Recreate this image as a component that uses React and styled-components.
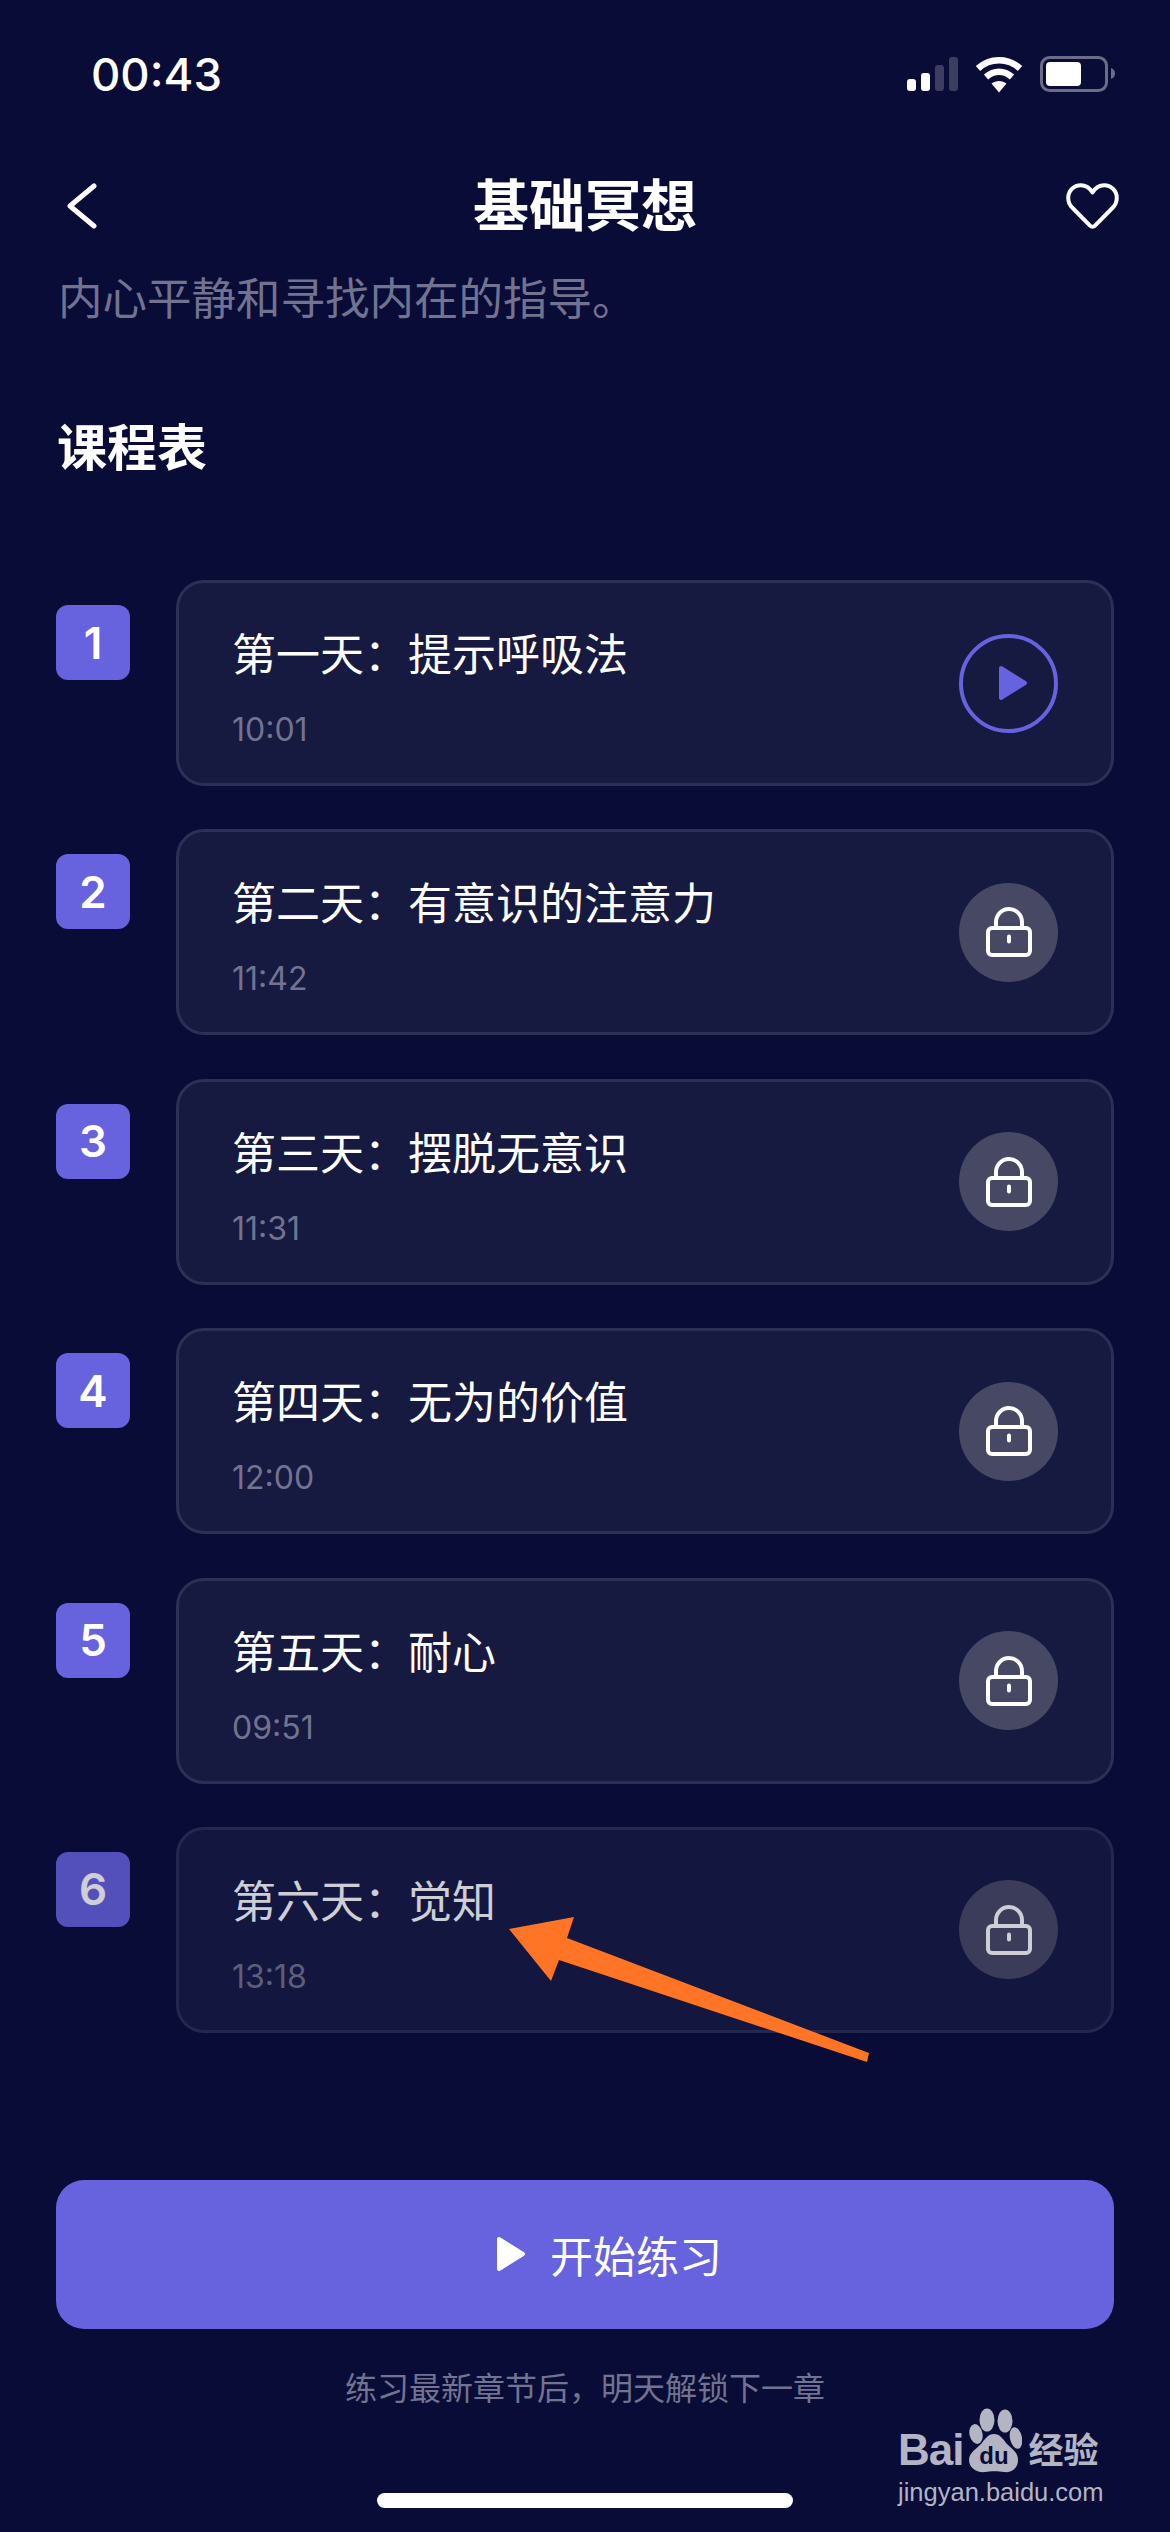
import styled, { createGlobalStyle } from 'styled-components';

const CJK = `"Noto Sans CJK SC", "Noto Sans", sans-serif`;
const LATIN = `Inter, "Noto Sans CJK SC", sans-serif`;
const BG = '#090c36';
const PURPLE = '#6762dd';
const MUTED = '#717390';

const lessons = [
  { day: '第一天\uFF1A提示呼吸法', time: '10:01', active: true },
  { day: '第二天\uFF1A有意识的注意力', time: '11:42' },
  { day: '第三天\uFF1A摆脱无意识', time: '11:31' },
  { day: '第四天\uFF1A无为的价值', time: '12:00' },
  { day: '第五天\uFF1A耐心', time: '09:51' },
  { day: '第六天\uFF1A觉知', time: '13:18', faded: true },
];

const GlobalStyle = createGlobalStyle`
  html, body {
    margin: 0;
    padding: 0;
    background: ${BG};
  }
  * {
    box-sizing: border-box;
  }
`;

const Screen = styled.div`
  position: relative;
  width: 1170px;
  height: 2532px;
  overflow: hidden;
  display: flex;
  flex-direction: column;
  background: ${BG};
  color: #fff;
  font-family: ${CJK};
`;

const StatusBar = styled.div`
  height: 148px;
  padding: 0 55px 0 91px;
  display: flex;
  align-items: center;
  justify-content: space-between;
`;

const Clock = styled.div`
  font-family: ${LATIN};
  font-size: 45.5px;
  font-weight: 500;
`;

const StatusIcons = styled.div`
  display: flex;
  align-items: center;
`;

const NavBar = styled.div`
  height: 116px;
  padding: 0 51px;
  display: grid;
  grid-template-columns: 1fr auto 1fr;
  align-items: center;
`;

const BackSlot = styled.div`
  display: flex;
  padding-left: 16px;
`;

const NavTitle = styled.div`
  font-size: 56px;
  font-weight: 700;
  line-height: 70px;
  margin-top: -8px;
`;

const HeartSlot = styled.div`
  display: flex;
  justify-content: flex-end;
`;

const Subtitle = styled.div`
  margin-top: 2px;
  padding: 0 58px;
  font-size: 44.5px;
  line-height: 60px;
  color: ${MUTED};
`;

const SectionTitle = styled.div`
  margin-top: 88px;
  padding: 0 57px;
  font-size: 50px;
  font-weight: 700;
  line-height: 60px;
`;

const LessonList = styled.div`
  margin-top: 106px;
  padding: 0 56px;
  display: flex;
  flex-direction: column;
  gap: 43.4px;
`;

const LessonRow = styled.div`
  display: flex;
  gap: 46px;
  opacity: ${({ $faded }) => ($faded ? 0.8 : 1)};
`;

const Badge = styled.div`
  flex: none;
  width: 74px;
  height: 75px;
  margin-top: 25px;
  border-radius: 12px;
  background: ${PURPLE};
  display: flex;
  align-items: center;
  justify-content: center;
  font-family: ${LATIN};
  font-size: 44px;
  font-weight: 600;
`;

const Card = styled.div`
  flex: 1;
  height: 206px;
  padding: 0 53px;
  border: 3px solid #2d2f55;
  border-radius: 28px;
  background: #161940;
  display: flex;
  align-items: center;
  justify-content: space-between;
`;

const CardText = styled.div`
  margin-top: 6px;
`;

const DayName = styled.div`
  font-size: 44px;
  line-height: 60px;
`;

const Duration = styled.div`
  margin-top: 28px;
  font-family: ${LATIN};
  font-size: 32px;
  line-height: 40px;
  color: ${MUTED};
`;

const RoundIcon = styled.div`
  width: 99px;
  height: 99px;
  border-radius: 50%;
  display: flex;
  align-items: center;
  justify-content: center;
  background: ${({ $locked }) => ($locked ? '#474864' : 'transparent')};
  border: ${({ $locked }) => ($locked ? 'none' : `4px solid ${PURPLE}`)};
`;

const StartButton = styled.div`
  margin: 147px 56px 0;
  height: 149px;
  padding-left: 48px;
  border-radius: 28px;
  background: ${PURPLE};
  display: flex;
  align-items: center;
  justify-content: center;
  gap: 24px;
  font-size: 43px;
`;

const Hint = styled.div`
  margin-top: 37px;
  text-align: center;
  font-size: 32px;
  line-height: 40px;
  color: ${MUTED};
`;

const HomeIndicator = styled.div`
  align-self: center;
  width: 416px;
  height: 15px;
  margin-top: 87px;
  border-radius: 8px;
  background: #fff;
`;

const Watermark = styled.div`
  position: absolute;
  left: 898px;
  top: 2408px;
  width: 212px;
  color: #b3b4c4;
  font-family: "Liberation Sans", sans-serif;
`;

const BrandLine = styled.div`
  display: flex;
  align-items: flex-end;
  height: 65px;
`;

const BrandWord = styled.span`
  font-size: 44px;
  font-weight: 700;
  line-height: 46px;
  letter-spacing: -1px;
  margin-right: 5px;
`;

const BrandTag = styled.span`
  font-family: ${CJK};
  font-size: 35px;
  font-weight: 700;
  line-height: 50px;
  margin-left: 6px;
`;

const Domain = styled.div`
  margin-top: 2px;
  font-size: 25.5px;
  line-height: 34px;
  white-space: nowrap;
`;

const ArrowOverlay = styled.svg`
  position: absolute;
  left: 0;
  top: 0;
  pointer-events: none;
`;

function SignalIcon() {
  const bars = [
    { x: 0, h: 12, on: true },
    { x: 14, h: 18, on: true },
    { x: 28, h: 26 },
    { x: 42, h: 34 },
  ];
  return (
    <svg width="51" height="34" viewBox="0 0 51 34">
      {bars.map((b) => (
        <rect
          key={b.x}
          x={b.x}
          y={34 - b.h}
          width="9"
          height={b.h}
          rx="3"
          fill={b.on ? '#fff' : '#3c3e60'}
        />
      ))}
    </svg>
  );
}

function WifiIcon() {
  return (
    <svg width="48" height="37" viewBox="0 0 48 37" style={{ margin: '0 17px' }}>
      <path d="M3 12.5C15 1.5 33 1.5 45 12.5" fill="none" stroke="#fff" strokeWidth="6.5" />
      <path d="M11 21C19 14 29 14 37 21" fill="none" stroke="#fff" strokeWidth="6.5" />
      <path d="M16.5 27.5C21 24 27 24 31.5 27.5L24 36.5Z" fill="#fff" />
    </svg>
  );
}

function BatteryIcon() {
  return (
    <svg width="75" height="36" viewBox="0 0 75 36">
      <rect x="1.5" y="1.5" width="65" height="33" rx="8" fill="none" stroke="#6a6c88" strokeWidth="3" />
      <rect x="6" y="6" width="35" height="24" rx="4" fill="#fff" />
      <path d="M71 12C74 13 75 15 75 17.5C75 20 74 22 71 23Z" fill="#6a6c88" />
    </svg>
  );
}

function BackIcon() {
  return (
    <svg width="30" height="46" viewBox="0 0 30 46">
      <path d="M27 3L3 23L27 43" fill="none" stroke="#fff" strokeWidth="5" strokeLinecap="round" strokeLinejoin="round" />
    </svg>
  );
}

function HeartIcon() {
  return (
    <svg width="53" height="46" viewBox="0 0 53 46">
      <path
        d="M26.5 9.5C23.5 4.5 19.5 2.2 14.8 2.2C7.8 2.2 2.2 7.8 2.2 15C2.2 19 3.8 22.3 6.6 25L24 42.6C25.4 44 27.6 44 29 42.6L46.4 25C49.2 22.3 50.8 19 50.8 15C50.8 7.8 45.2 2.2 38.2 2.2C33.5 2.2 29.5 4.5 26.5 9.5Z"
        fill="none"
        stroke="#fff"
        strokeWidth="4"
        strokeLinejoin="round"
      />
    </svg>
  );
}

function PlayIcon({ color, style }) {
  return (
    <svg width="30" height="36" viewBox="0 0 30 36" style={style}>
      <path d="M3 3L27 18L3 33Z" fill={color} stroke={color} strokeWidth="4" strokeLinejoin="round" />
    </svg>
  );
}

function LockIcon() {
  return (
    <svg width="46" height="50" viewBox="0 0 46 50" fill="none" stroke="#fff" strokeWidth="4">
      <rect x="2" y="21" width="42" height="27" rx="4" />
      <path d="M10 21V15a13 13 0 0 1 26 0V21" />
      <path d="M23 29.5V34.5" strokeLinecap="round" />
    </svg>
  );
}

function PawIcon() {
  return (
    <svg width="54" height="65" viewBox="0 0 54 65">
      <ellipse cx="8" cy="26" rx="6.5" ry="10" transform="rotate(-12 8 26)" fill="#b3b4c4" />
      <ellipse cx="19" cy="12" rx="7.5" ry="11.5" fill="#b3b4c4" />
      <ellipse cx="37" cy="13" rx="7.5" ry="11.5" fill="#b3b4c4" />
      <ellipse cx="48" cy="30" rx="6" ry="11" transform="rotate(-12 48 30)" fill="#b3b4c4" />
      <path
        d="M26 26C32 26 35 31 39 36C44 41 50 44 50 52C50 60 44 65 36 64C31 63 22 63 17 64C9 65 1 60 1 52C1 45 8 41 13 36C17 31 20 26 26 26Z"
        fill="#b3b4c4"
      />
      <text x="26" y="56" textAnchor="middle" fontFamily="Liberation Sans, sans-serif" fontSize="24" fontWeight="700" fill={BG}>
        du
      </text>
    </svg>
  );
}

function Lesson({ index, day, time, active, faded }) {
  return (
    <LessonRow $faded={faded}>
      <Badge>{index}</Badge>
      <Card>
        <CardText>
          <DayName>{day}</DayName>
          <Duration>{time}</Duration>
        </CardText>
        {active ? (
          <RoundIcon>
            <PlayIcon color={PURPLE} style={{ marginLeft: 8 }} />
          </RoundIcon>
        ) : (
          <RoundIcon $locked>
            <LockIcon />
          </RoundIcon>
        )}
      </Card>
    </LessonRow>
  );
}

export default function App() {
  return (
    <>
      <GlobalStyle />
      <Screen>
        <StatusBar>
          <Clock>00:43</Clock>
          <StatusIcons>
            <SignalIcon />
            <WifiIcon />
            <BatteryIcon />
          </StatusIcons>
        </StatusBar>
        <NavBar>
          <BackSlot>
            <BackIcon />
          </BackSlot>
          <NavTitle>基础冥想</NavTitle>
          <HeartSlot>
            <HeartIcon />
          </HeartSlot>
        </NavBar>
        <Subtitle>内心平静和寻找内在的指导。</Subtitle>
        <SectionTitle>课程表</SectionTitle>
        <LessonList>
          {lessons.map((lesson, i) => (
            <Lesson key={lesson.day} index={i + 1} {...lesson} />
          ))}
        </LessonList>
        <StartButton>
          <PlayIcon color="#fff" />
          开始练习
        </StartButton>
        <Hint>{'练习最新章节后\uFF0C明天解锁下一章'}</Hint>
        <HomeIndicator />
        <Watermark>
          <BrandLine>
            <BrandWord>Bai</BrandWord>
            <PawIcon />
            <BrandTag>经验</BrandTag>
          </BrandLine>
          <Domain>jingyan.baidu.com</Domain>
        </Watermark>
        <ArrowOverlay width="1170" height="2532" viewBox="0 0 1170 2532">
          <polygon points="509,1929 574,1917 567,1938 869,2053 867,2062 559,1960 551,1981" fill="#ff7525" />
        </ArrowOverlay>
      </Screen>
    </>
  );
}
